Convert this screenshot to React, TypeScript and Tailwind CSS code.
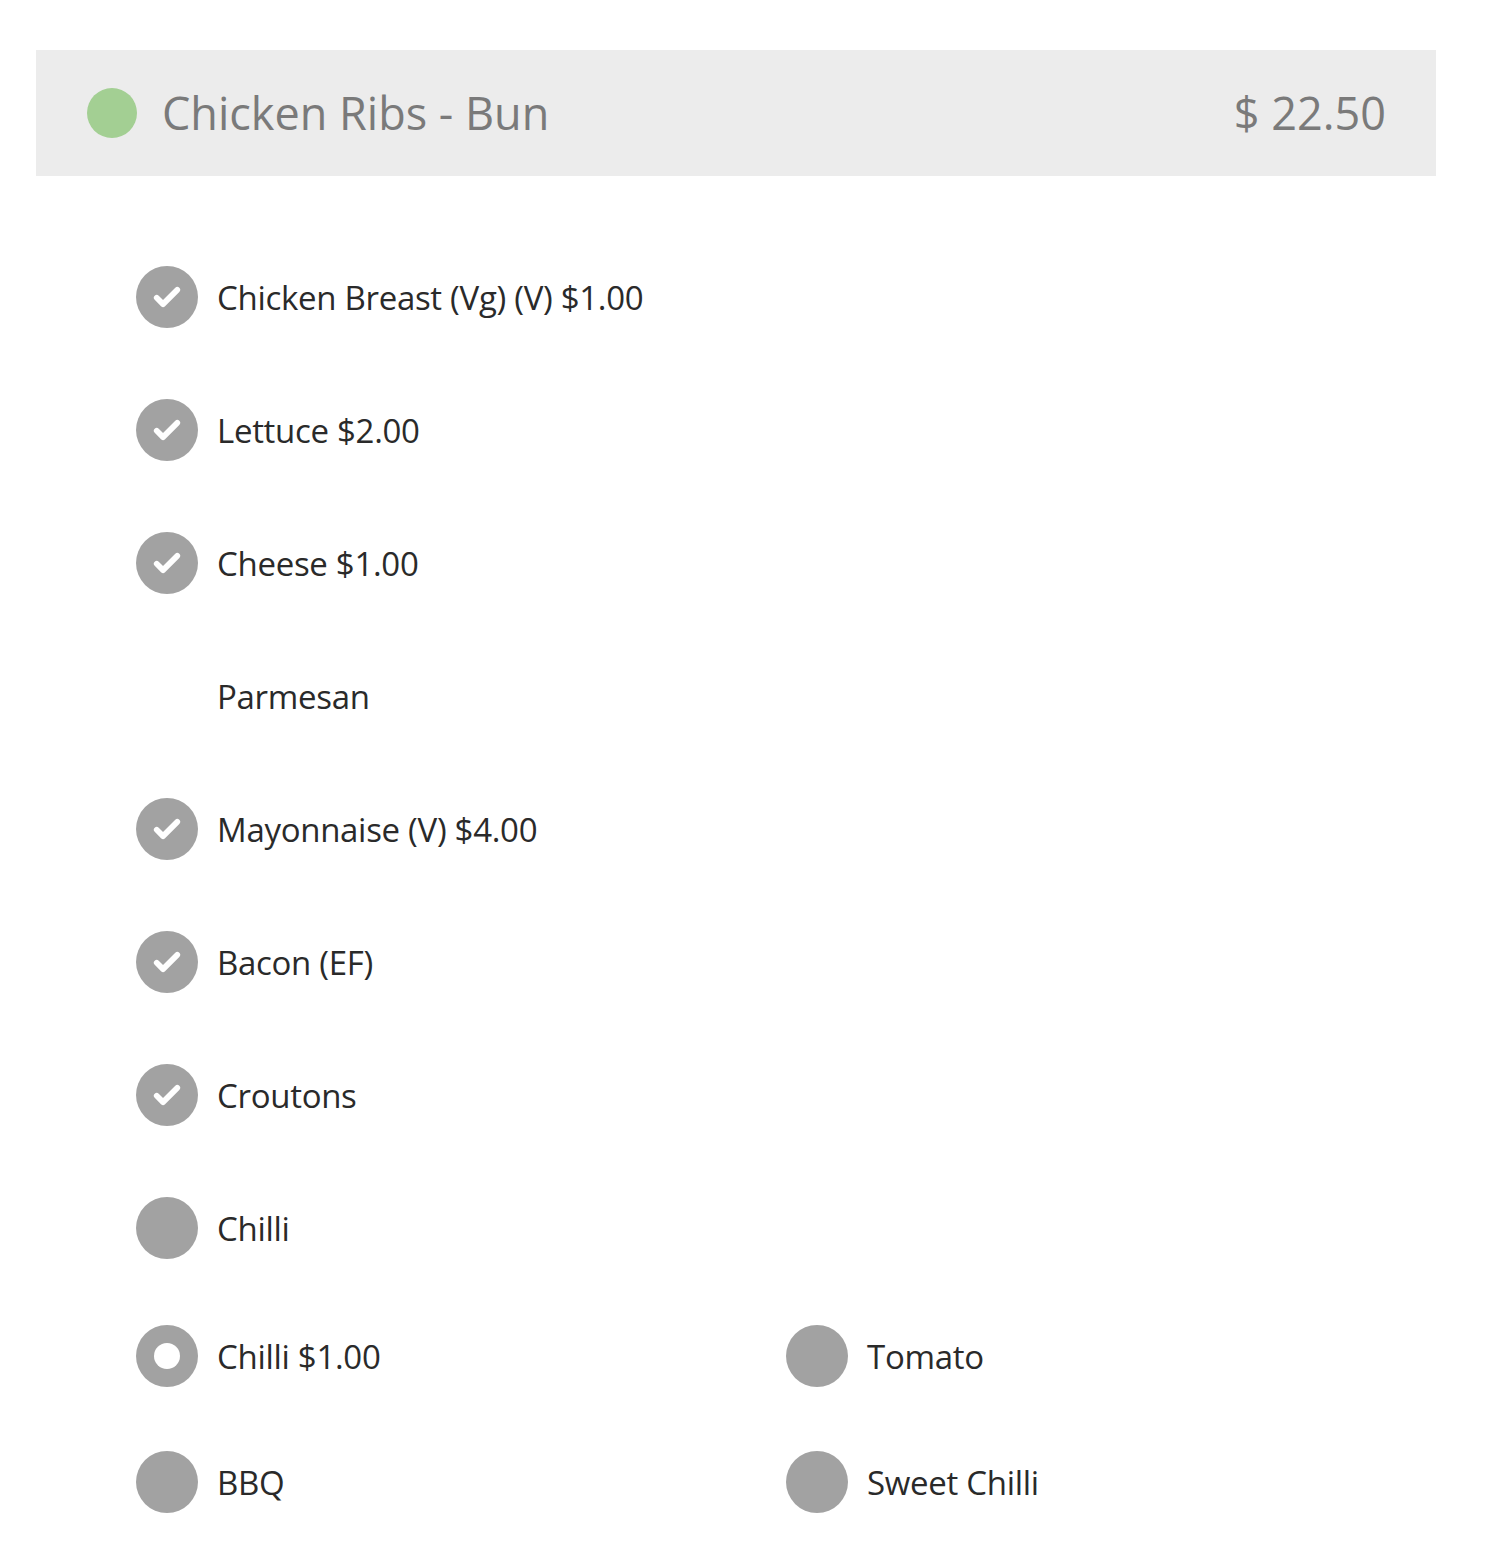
import React from "react";

type Opt = { label: string; state: "checked" | "none" | "radio" | "blank" };

const rows: Opt[] = [
  { label: "Chicken Breast (Vg) (V) $1.00", state: "checked" },
  { label: "Lettuce $2.00", state: "checked" },
  { label: "Cheese $1.00", state: "checked" },
  { label: "Parmesan", state: "none" },
  { label: "Mayonnaise (V) $4.00", state: "checked" },
  { label: "Bacon (EF)", state: "checked" },
  { label: "Croutons", state: "checked" },
  { label: "Chilli", state: "blank" },
];

const pairs: Opt[][] = [
  [
    { label: "Chilli $1.00", state: "radio" },
    { label: "Tomato", state: "blank" },
  ],
  [
    { label: "BBQ", state: "blank" },
    { label: "Sweet Chilli", state: "blank" },
  ],
];

const Mark = ({ state }: { state: Opt["state"] }) => {
  if (state === "none") return <div className="size-[62px] shrink-0" />;
  return (
    <div className="size-[62px] shrink-0 rounded-full bg-[#a2a2a2] flex items-center justify-center">
      {state === "checked" && (
        <svg viewBox="0 0 24 24" className="size-[38px]">
          <path
            d="M5.5 12.5l4 4L18.5 7.5"
            fill="none"
            stroke="#fff"
            strokeWidth="3.6"
            strokeLinecap="round"
            strokeLinejoin="round"
          />
        </svg>
      )}
      {state === "radio" && <div className="size-[26px] rounded-full bg-white" />}
    </div>
  );
};

const Row = ({ opt }: { opt: Opt }) => (
  <div className="flex items-center gap-[19px] h-[62px]">
    <Mark state={opt.state} />
    <span className="text-[33px] text-[#2a2a2a] leading-none tracking-[-0.3px]">{opt.label}</span>
  </div>
);

export default function App() {
  return (
    <div className="bg-white min-h-[1552px] pt-[50px] pl-[36px] pr-[50px] font-['Open_Sans',sans-serif]">
      <div className="bg-[#ececec] h-[126px] flex items-center pl-[51px] pr-[50px]">
        <div className="size-[50px] rounded-full bg-[#a3cf93]" />
        <h1 className="ml-[25px] text-[45px] text-[#7a7a7a] flex-1">Chicken Ribs - Bun</h1>
        <span className="text-[45px] text-[#7a7a7a]">$ 22.50</span>
      </div>
      <div className="pl-[100px] pt-[90px] flex flex-col gap-[71px]">
        {rows.map((o) => (
          <Row key={o.label} opt={o} />
        ))}
      </div>
      <div className="pl-[100px] pt-[66px] flex flex-col gap-[64px]">
        {pairs.map((p, i) => (
          <div key={i} className="grid grid-cols-[650px_1fr]">
            {p.map((o) => (
              <Row key={o.label} opt={o} />
            ))}
          </div>
        ))}
      </div>
    </div>
  );
}
